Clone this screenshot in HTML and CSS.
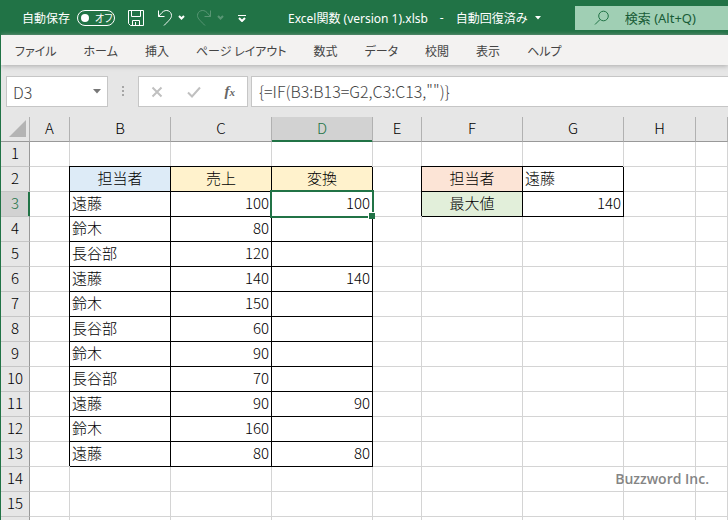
FILE: index.html
```html
<!DOCTYPE html>
<html lang="ja">
<head>
    <meta charset="UTF-8">
    <meta name="viewport" content="width=device-width, initial-scale=1.0">
    <title>Excel関数</title>
    <link rel="stylesheet" href="styles.css">
</head>
<body>
    <header class="titlebar">
        <label class="autosave">自動保存
            <span class="switch">
                <input type="checkbox">
                <span class="switch-text">オフ</span>
            </span>
        </label>
        <div class="quick">
            <button class="quick-btn save" aria-label="保存">
                <svg width="18" height="18" viewBox="0 0 18 18"><path d="M1.500 1.500h15v15h-13l-2-2zM4.500 1.500v6h9v-6M5.500 16.500v-5h7v5M8.500 13v3.500"/></svg>
            </button>
            <button class="quick-btn undo" aria-label="元に戻す">
                <svg width="28" height="18" viewBox="0 0 28 18"><path d="M1.500 1.500v6h6M1.500 7.500L5 3.500C9-.5 14.500 2 14.500 6.500C14.500 9 13 10.500 7 16.500"/><path class="thick" d="M22 7l2.500 2.500L27 7"/></svg>
            </button>
            <button class="quick-btn redo" aria-label="やり直し" disabled>
                <svg width="28" height="18" viewBox="0 0 28 18"><path d="M14.500 1.500v6h-6M14.500 7.500L11 3.500C7-.5 1.500 2 1.500 6.500C1.500 9 3 10.500 9 16.500"/><path class="thick" d="M22 7l2.500 2.500L27 7"/></svg>
            </button>
            <button class="quick-btn more" aria-label="カスタマイズ">
                <svg width="8" height="8" viewBox="0 0 8 8"><path d="M0 1.500h8"/><path class="thick" d="M1 4l3 3 3-3"/></svg>
            </button>
        </div>
        <button class="filename">
            <span>Excel関数 (version 1).xlsb</span>
            <span class="dash">-</span>
            <span>自動回復済み</span>
            <svg width="6" height="4" viewBox="0 0 6 4"><path d="M0 0h6L3 3.500z"/></svg>
        </button>
        <label class="search">
            <svg width="16" height="16" viewBox="0 0 16 16"><circle cx="9.500" cy="6" r="4.800"/><path d="M6 9.500L1 14.500"/></svg>
            <input type="text" placeholder="検索 (Alt+Q)" aria-label="検索">
        </label>
    </header>

    <nav class="tabs">
        <a href="#">ファイル</a>
        <a href="#">ホーム</a>
        <a href="#">挿入</a>
        <a href="#">ページ レイアウト</a>
        <a href="#">数式</a>
        <a href="#">データ</a>
        <a href="#">校閲</a>
        <a href="#">表示</a>
        <a href="#">ヘルプ</a>
    </nav>

    <div class="formula-bar">
        <div class="namebox">
            <input type="text" value="D3" aria-label="名前ボックス">
            <button aria-label="名前の一覧"><svg width="8" height="5" viewBox="0 0 8 5"><path d="M0 0h8L4 4.500z"/></svg></button>
        </div>
        <svg class="dots" width="2" height="11" viewBox="0 0 2 11"><path d="M0 0h2v2H0zM0 4h2v2H0zM0 8h2v2H0z"/></svg>
        <div class="tools">
            <button aria-label="キャンセル"><svg width="12" height="12" viewBox="0 0 12 12"><path d="M1.500 1.500l9 9M10.500 1.500l-9 9"/></svg></button>
            <button aria-label="入力"><svg width="14" height="12" viewBox="0 0 14 12"><path d="M1 6.500l4 4 8-9"/></svg></button>
            <button class="fx" aria-label="関数の挿入">f<small>x</small></button>
        </div>
        <input class="formula" type="text" value='{=IF(B3:B13=G2,C3:C13,"")}' aria-label="数式">
    </div>

    <main class="sheet">
        <table>
            <colgroup>
                <col class="col-num"><col class="col-a"><col class="col-wide"><col class="col-wide"><col class="col-wide">
                <col class="col-e"><col class="col-wide"><col class="col-wide"><col class="col-h"><col>
            </colgroup>
            <thead>
                <tr><th class="corner"><svg width="17" height="17" viewBox="0 0 17 17"><path d="M17 0v17H0z"/></svg></th><th>A</th><th>B</th><th>C</th><th class="active">D</th><th>E</th><th>F</th><th>G</th><th>H</th><th></th></tr>
            </thead>
            <tbody>
                <tr><th>1</th><td></td><td></td><td></td><td></td><td></td><td></td><td></td><td></td><td></td></tr>
                <tr><th>2</th><td></td><td class="box head blue">担当者</td><td class="box head yellow">売上</td><td class="box head yellow">変換</td><td></td><td class="box head orange">担当者</td><td class="box">遠藤</td><td></td><td></td></tr>
                <tr><th class="active">3</th><td></td><td class="box">遠藤</td><td class="box num">100</td><td class="box num selected">100</td><td></td><td class="box head green">最大値</td><td class="box num">140</td><td></td><td></td></tr>
                <tr><th>4</th><td></td><td class="box">鈴木</td><td class="box num">80</td><td class="box num"></td><td></td><td></td><td></td><td></td><td></td></tr>
                <tr><th>5</th><td></td><td class="box">長谷部</td><td class="box num">120</td><td class="box num"></td><td></td><td></td><td></td><td></td><td></td></tr>
                <tr><th>6</th><td></td><td class="box">遠藤</td><td class="box num">140</td><td class="box num">140</td><td></td><td></td><td></td><td></td><td></td></tr>
                <tr><th>7</th><td></td><td class="box">鈴木</td><td class="box num">150</td><td class="box num"></td><td></td><td></td><td></td><td></td><td></td></tr>
                <tr><th>8</th><td></td><td class="box">長谷部</td><td class="box num">60</td><td class="box num"></td><td></td><td></td><td></td><td></td><td></td></tr>
                <tr><th>9</th><td></td><td class="box">鈴木</td><td class="box num">90</td><td class="box num"></td><td></td><td></td><td></td><td></td><td></td></tr>
                <tr><th>10</th><td></td><td class="box">長谷部</td><td class="box num">70</td><td class="box num"></td><td></td><td></td><td></td><td></td><td></td></tr>
                <tr><th>11</th><td></td><td class="box">遠藤</td><td class="box num">90</td><td class="box num">90</td><td></td><td></td><td></td><td></td><td></td></tr>
                <tr><th>12</th><td></td><td class="box">鈴木</td><td class="box num">160</td><td class="box num"></td><td></td><td></td><td></td><td></td><td></td></tr>
                <tr><th>13</th><td></td><td class="box">遠藤</td><td class="box num">80</td><td class="box num">80</td><td></td><td></td><td></td><td></td><td></td></tr>
                <tr><th>14</th><td></td><td></td><td></td><td></td><td></td><td></td><td></td><td></td><td></td></tr>
                <tr><th>15</th><td></td><td></td><td></td><td></td><td></td><td></td><td></td><td></td><td></td></tr>
                <tr><th></th><td></td><td></td><td></td><td></td><td></td><td></td><td></td><td></td><td></td></tr>
            </tbody>
        </table>
        <div class="credit">Buzzword Inc.</div>
    </main>
</body>
</html>
```
FILE: styles.css
```css
* {
    box-sizing: border-box;
}

body {
    margin: 0;
    height: 100vh;
    display: flex;
    flex-direction: column;
    overflow: hidden;
    border-left: 1px solid #217346;
    background: #e6e6e6;
    font-family: "Noto Sans CJK JP", sans-serif;
    font-size: 12px;
    color: #222;
}

button, input {
    font: inherit;
    color: inherit;
    border: none;
    background: none;
    padding: 0;
    margin: 0;
    outline: none;
}

svg {
    display: block;
}

/* title bar */
.titlebar {
    display: flex;
    align-items: center;
    height: 35px;
    flex: none;
    padding-left: 21px;
    background: #217346;
    color: #fff;
}
.autosave {
    display: flex;
    align-items: center;
    gap: 7px;
    white-space: nowrap;
}
.switch {
    display: flex;
    align-items: center;
    gap: 6px;
    width: 38px;
    height: 16px;
    padding-left: 3px;
    border: 1px solid #fff;
    border-radius: 8px;
}
.switch input {
    appearance: none;
    width: 8px;
    height: 8px;
    border-radius: 50%;
    background: #fff;
}
.switch-text {
    font-size: 10px;
    line-height: 14px;
    font-feature-settings: "palt";
}
.quick {
    display: flex;
    align-items: center;
    margin-left: 12px;
}
.quick-btn svg {
    fill: none;
    stroke: #fff;
}
.quick-btn .thick {
    stroke-width: 2;
}
.undo {
    margin-left: 12px;
}
.redo {
    margin-left: 11px;
    opacity: 0.25;
}
.more {
    margin-left: 14px;
}
.filename {
    display: flex;
    align-items: center;
    gap: 7px;
    margin-left: 42px;
    white-space: nowrap;
    font-family: "Noto Sans", "Noto Sans CJK JP", sans-serif;
}
.filename .dash {
    margin: 0 5px;
}
.filename svg {
    fill: #fff;
}
.search {
    display: flex;
    align-items: center;
    gap: 15px;
    flex: 1;
    min-width: 0;
    height: 24px;
    margin-left: 34px;
    padding-left: 19px;
    background: #a0cfb4;
    color: #185c37;
}
.search svg {
    flex: none;
    fill: none;
    stroke: #217346;
}
.search input {
    flex: 1;
    min-width: 0;
    font-family: "Noto Sans", "Noto Sans CJK JP", sans-serif;
    font-size: 13px;
}
.search input::placeholder {
    color: #185c37;
    opacity: 1;
}

/* ribbon tabs */
.tabs {
    position: relative;
    display: flex;
    align-items: center;
    gap: 27px;
    height: 30px;
    flex: none;
    padding-left: 14px;
    background: #f3f2f1;
    box-shadow: 0 1px 5px #aaa;
}
.tabs a {
    color: #444;
    text-decoration: none;
    white-space: nowrap;
    font-feature-settings: "palt";
}

/* formula bar */
.formula-bar {
    display: flex;
    align-items: center;
    flex: none;
    padding: 11px 0 10px 5px;
    font-weight: 300;
    font-size: 16px;
    color: #444;
}
.namebox, .tools, .formula {
    height: 31px;
    border: 1px solid #c6c6c6;
    background: #fff;
}
.namebox {
    display: flex;
    align-items: center;
    width: 102px;
    padding: 0 6px;
}
.namebox input {
    flex: 1;
    min-width: 0;
}
.namebox svg {
    fill: #777;
}
.dots {
    margin: 0 14px;
    fill: #a6a6a6;
}
.tools {
    display: flex;
    align-items: center;
    justify-content: space-between;
    flex: none;
    width: 110px;
    padding: 0 12px;
}
.tools svg {
    fill: none;
    stroke: #c0c0c0;
    stroke-width: 2;
}
.fx {
    font: italic bold 15px/20px "Liberation Serif", serif;
    color: #666;
}
.fx small {
    font-size: 11px;
}
.formula {
    flex: 1;
    min-width: 0;
    margin-left: 3px;
    padding: 0 0 2px 7px;
    border-right: none;
}

/* grid */
.sheet {
    position: relative;
    flex: 1;
    min-height: 0;
    overflow: hidden;
    background: #fff;
}
table {
    width: 100%;
    table-layout: fixed;
    border-collapse: separate;
    border-spacing: 0;
    font-size: 15px;
    font-weight: 300;
    line-height: 22px;
    color: #000;
}
.col-num {
    width: 29px;
}
.col-a {
    width: 40px;
}
.col-wide {
    width: 101px;
}
.col-e {
    width: 49px;
}
.col-h {
    width: 72px;
}
th, td {
    height: 25px;
    padding: 0 2px 2px;
    border-right: 1px solid #d4d4d4;
    border-bottom: 1px solid #d4d4d4;
    white-space: nowrap;
}
th {
    padding: 0 0 2px;
    background: #e6e6e6;
    font-weight: 300;
    text-align: center;
}
thead th {
    border-right-color: #b1b1b1;
    border-bottom-color: #999;
}
tbody th {
    border-right-color: #999;
    border-bottom-color: #c6c6c6;
}
.corner svg {
    margin-left: 8px;
    fill: #b4b4b4;
}
th.active {
    background: #d2d2d2;
    color: #217346;
}
thead th.active {
    box-shadow: inset 0 -1px #217346;
    border-bottom-color: #217346;
}
tbody th.active {
    box-shadow: inset -1px 0 #217346;
    border-right-color: #217346;
}
/* the shadow draws the left and top edges over the neighbour cells */
.box {
    border-color: #000;
    box-shadow: -1px -1px #000;
    background: #fff;
}
.head {
    text-align: center;
}
.num {
    text-align: right;
}
.blue {
    background: #ddebf7;
}
.yellow {
    background: #fff2cc;
}
.orange {
    background: #fce4d6;
}
.green {
    background: #e2efda;
}
.selected {
    position: relative;
}
.selected::before {
    content: "";
    position: absolute;
    inset: -2px;
    border: 2px solid #217346;
}
.selected::after {
    content: "";
    position: absolute;
    right: -3px;
    bottom: -3px;
    width: 6px;
    height: 6px;
    border: 1px solid #fff;
    border-width: 1px 0 0 1px;
    background: #217346;
}
.credit {
    position: absolute;
    right: 19px;
    bottom: 31px;
    font: 600 14px/20px "Open Sans", sans-serif;
    color: #858585;
}
```
